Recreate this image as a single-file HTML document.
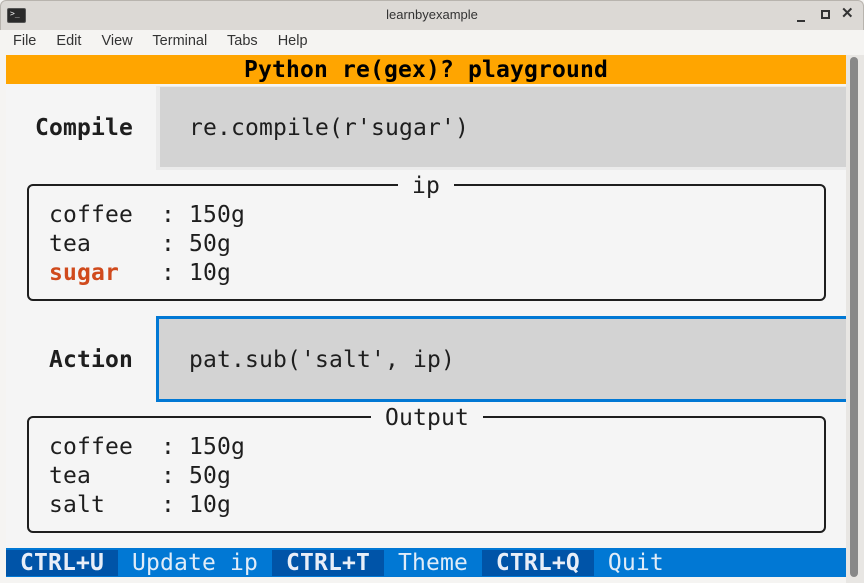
<!DOCTYPE html>
<html><head><meta charset="utf-8"><style>
*{margin:0;padding:0;box-sizing:border-box}
body{width:864px;height:583px;overflow:hidden;background:#f5f4f2;font-family:"Liberation Sans",sans-serif;position:relative}
.a{position:absolute}
.m{font-family:"DejaVu Sans Mono",monospace;font-size:23px;line-height:29px;white-space:pre;color:#1e1e1e;letter-spacing:0.15px}
.t{padding-top:1px}
.b{font-weight:bold}
</style></head><body>
<div class="a" style="left:0;top:0;width:864px;height:30px;background:#dcd9d5;border-radius:6px 6px 0 0;border:1px solid #b8b4ae;border-bottom:none"></div>
<div class="a" style="left:7px;top:8px;width:19px;height:15px;background:#2a2a2a;border:1px solid #555;border-radius:2px"></div>
<div class="a" style="left:10px;top:9px;color:#eee;font-size:8px;font-family:'DejaVu Sans Mono',monospace">&gt;_</div>
<div class="a" style="left:0;top:7px;width:864px;text-align:center;font-size:13px;color:#333">learnbyexample</div>
<div class="a" style="left:797px;top:20px;width:8px;height:2px;background:#333"></div>
<div class="a" style="left:821px;top:10px;width:9px;height:9px;border:2px solid #333"></div>
<div class="a" style="left:841px;top:4px;font-size:15px;color:#333;font-weight:bold">✕</div>
<div class="a" style="left:0;top:30px;width:864px;height:24px;background:#f5f4f2"></div>
<div class="a" style="left:13px;top:33px;font-size:14.5px;color:#333;word-spacing:6px">File&nbsp; Edit&nbsp; View&nbsp; Terminal&nbsp; Tabs&nbsp; Help</div>
<div class="a" style="left:6px;top:55px;width:840px;height:522px;background:#f5f5f5"></div>
<div class="a" style="left:846px;top:55px;width:18px;height:528px;background:#e8e6e3"></div>
<div class="a" style="left:850px;top:57px;width:8px;height:520px;background:#888;border-radius:4px"></div>
<div class="a m b t" style="left:6px;top:55px;width:840px;height:29px;background:#ffa500;text-align:center;color:#000">Python re(gex)? playground</div>
<div class="a m b t" style="left:35px;top:113px">Compile</div>
<div class="a" style="left:156px;top:86px;width:690px;height:84px;background:#ebebeb"></div>
<div class="a" style="left:160px;top:87px;width:686px;height:80px;background:#d3d3d3"></div>
<div class="a m t" style="left:189px;top:113px">re.compile(r'sugar')</div>
<div class="a" style="left:27px;top:184px;width:799px;height:117px;border:2px solid #1e1e1e;border-radius:6px"></div>
<div class="a m t" style="left:398px;top:171px;background:#f5f5f5;padding-left:14px;padding-right:14px">ip</div>
<div class="a m t" style="left:49px;top:200px">coffee  : 150g
tea     : 50g
<span class="b" style="color:#d04a1c">sugar</span>   : 10g</div>
<div class="a m b t" style="left:49px;top:345px">Action</div>
<div class="a" style="left:156px;top:316px;width:690px;height:86px;background:#d3d3d3;border:3px solid #0178d4;border-right:none"></div>
<div class="a m t" style="left:189px;top:345px">pat.sub('salt', ip)</div>
<div class="a" style="left:27px;top:416px;width:799px;height:117px;border:2px solid #1e1e1e;border-radius:6px"></div>
<div class="a m t" style="left:371px;top:403px;background:#f5f5f5;padding-left:14px;padding-right:14px">Output</div>
<div class="a m t" style="left:49px;top:432px">coffee  : 150g
tea     : 50g
salt    : 10g</div>
<div class="a m t" style="left:6px;top:548px;width:840px;height:29px;background:#0178d4;color:#e0ecf8"><span class="b" style="background:#0054a8;color:#e8eef8"> CTRL+U </span> Update ip <span class="b" style="background:#0054a8;color:#e8eef8"> CTRL+T </span> Theme <span class="b" style="background:#0054a8;color:#e8eef8"> CTRL+Q </span> Quit</div>
</body></html>
